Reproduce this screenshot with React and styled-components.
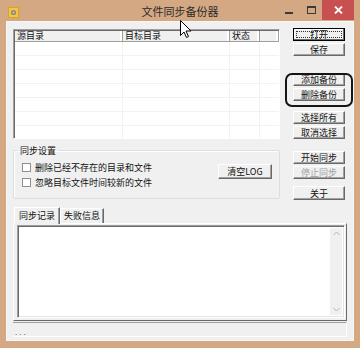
import styled, { createGlobalStyle } from "styled-components";

const GlobalStyle = createGlobalStyle`
  html, body {
    margin: 0;
    padding: 0;
    background: #ffffff;
  }
  * {
    box-sizing: border-box;
  }
`;

const font = `"Noto Sans CJK SC", "Noto Sans", sans-serif`;

const Window = styled.div`
  position: relative;
  width: 360px;
  height: 348px;
  background: #d3a882;
  padding: 0 6px 7px 6px;
  display: flex;
  flex-direction: column;
  font-family: ${font};
  font-size: 9px;
  line-height: 11px;
  color: #111;
`;

const TitleBar = styled.div`
  height: 23px;
  display: grid;
  grid-template-columns: 1fr auto 1fr;
  align-items: start;
`;

const AppIcon = styled.div`
  padding: 7px 0 0 2px;
  display: flex;
`;

const Title = styled.div`
  padding-top: 4px;
  font-size: 11px;
  line-height: 14px;
  color: #2b2b2b;
`;

const Controls = styled.div`
  display: flex;
  justify-content: flex-end;
  align-items: flex-start;
`;

const CtlButton = styled.div`
  width: ${(p) => p.$w}px;
  height: 20px;
  display: flex;
  align-items: center;
  justify-content: center;
  background: ${(p) => (p.$close ? "#c75050" : "transparent")};
`;

const Client = styled.div`
  flex: 1;
  background: #f0f0f0;
  border: 1px solid #f7f7f7;
  padding: 7px 6px 3px 6px;
  display: flex;
  flex-direction: column;
`;

const TopRow = styled.div`
  display: flex;
  align-items: flex-start;
`;

const LeftCol = styled.div`
  width: 267px;
  display: flex;
  flex-direction: column;
`;

const RightCol = styled.div`
  margin-left: auto;
  margin-right: 2px;
  margin-top: -1px;
  width: 52px;
  display: flex;
  flex-direction: column;
`;

const ListView = styled.div`
  height: 110px;
  background: #fff;
  border: 1px solid;
  border-color: #a0a0a0 #ffffff #ffffff #a0a0a0;
  box-shadow: inset 1px 1px 0 #696969;
  padding: 1px 0 0 1px;
  display: flex;
  flex-direction: column;
  overflow: hidden;
`;

const Header = styled.div`
  display: flex;
  height: 11px;
  background: #f0f0f0;
  border-bottom: 1px solid #a0a0a0;
`;

const HeadCell = styled.div`
  width: ${(p) => p.$w}px;
  flex: ${(p) => (p.$grow ? 1 : "none")};
  padding-left: 2px;
  line-height: 10px;
  border-right: 1px solid #a0a0a0;
  box-shadow: inset -2px 0 0 #ffffff;
  white-space: nowrap;
`;

const Rows = styled.div`
  flex: 1;
  background-image: linear-gradient(to bottom, transparent 13px, #f2f2f2 13px),
    linear-gradient(to right, transparent 107px, #f2f2f2 107px, #f2f2f2 108px, transparent 108px, transparent 214px, #f2f2f2 214px, #f2f2f2 215px, transparent 215px, transparent 244px, #f2f2f2 244px, #f2f2f2 245px, transparent 245px);
  background-size: 100% 14px, 100% 100%;
`;

const Group = styled.fieldset`
  margin: 6px 0 0 0;
  height: 54px;
  border: 1px solid #d5dfe5;
  box-shadow: inset 1px 1px 0 #ffffff;
  border-radius: 2px;
  padding: 0 7px 0 8px;
  display: flex;
  align-items: flex-start;
`;

const Legend = styled.legend`
  padding: 0 2px;
  margin-left: -4px;
  line-height: 11px;
`;

const Checks = styled.div`
  display: flex;
  flex-direction: column;
  gap: 4px;
  padding-top: 6px;
`;

const CheckRow = styled.label`
  display: flex;
  align-items: center;
  gap: 4px;
  height: 11px;
  white-space: nowrap;
`;

const Box = styled.span`
  width: 9px;
  height: 9px;
  background: #fff;
  border: 1px solid #8f8f8f;
`;

const Btn = styled.div`
  width: ${(p) => p.$w || 52}px;
  height: ${(p) => p.$h || 13}px;
  display: flex;
  align-items: center;
  justify-content: center;
  white-space: nowrap;
  background: #f0f0f0;
  color: ${(p) => (p.$disabled ? "#a0a0a0" : "#111")};
  border: 1px solid;
  border-color: ${(p) =>
    p.$default ? "#000 #000 #000 #000" : "#ffffff #696969 #696969 #ffffff"};
  box-shadow: ${(p) =>
    p.$default
      ? "inset -1px -1px 0 #696969, inset 1px 1px 0 #fff"
      : "inset -1px -1px 0 #a0a0a0"};
  position: relative;
`;

const Focus = styled.span`
  position: absolute;
  inset: 2px;
  border: 1px dotted #333;
`;

const Stack = styled.div`
  display: flex;
  flex-direction: column;
  gap: 2px;
  margin-top: ${(p) => p.$mt || 0}px;
`;

const ClearBtn = styled(Btn)`
  margin-left: auto;
  margin-top: 8px;
`;

const Tabs = styled.div`
  display: flex;
  align-items: flex-end;
  height: 17px;
  margin-top: 6px;
  padding-left: 1px;
`;

const Tab = styled.div`
  height: ${(p) => (p.$active ? 17 : 15)}px;
  padding: ${(p) => (p.$active ? "2px 4px 0" : "1px 3px 0")};
  white-space: nowrap;
  border: 1px solid;
  border-bottom: none;
  border-color: #ffffff #696969 transparent #ffffff;
  box-shadow: inset -1px 0 0 #a0a0a0;
  background: #f0f0f0;
  position: relative;
  z-index: ${(p) => (p.$active ? 1 : 0)};
  margin-bottom: ${(p) => (p.$active ? -1 : 0)}px;
`;

const Panel = styled.div`
  height: 98px;
  border: 1px solid;
  border-color: #ffffff #696969 #696969 #ffffff;
  padding: 1px 1px 2px 3px;
  display: flex;
`;

const Edit = styled.div`
  flex: 1;
  background: #fff;
  border: 1px solid;
  border-color: #a0a0a0 #ffffff #ffffff #a0a0a0;
  box-shadow: inset 1px 1px 0 #696969, inset -1px -1px 0 #e3e3e3;
  display: flex;
  justify-content: flex-end;
  padding: 2px 2px 2px 0;
`;

const ScrollBar = styled.div`
  width: 12px;
  background: #f0f0f0;
  display: flex;
  flex-direction: column;
  justify-content: space-between;
  align-items: center;
  padding: 3px 0;
`;

const StatusBar = styled.div`
  margin-top: 1px;
  height: 15px;
  border-top: 1px solid #a0a0a0;
  border-right: 1px solid #ffffff;
  border-bottom: 1px solid #ffffff;
  padding-left: 2px;
  display: flex;
  align-items: flex-end;
  font-size: 8px;
  color: #707070;
  line-height: 9px;
  letter-spacing: 2px;
`;

const Annotation = styled.div`
  position: absolute;
  left: 285px;
  top: 73px;
  width: 68px;
  height: 34px;
  border: 2px solid #151515;
  border-radius: 7px;
  pointer-events: none;
`;

const Cursor = styled.svg`
  position: absolute;
  left: 180px;
  top: 20px;
`;

const Arrow = ({ up }) => (
  <svg width="7" height="5" viewBox="0 0 7 5">
    <path
      d={up ? "M0.5 4 L3.5 1 L6.5 4" : "M0.5 1 L3.5 4 L6.5 1"}
      fill="none"
      stroke="#b5b5b5"
      strokeWidth="1"
    />
  </svg>
);

export default function App() {
  return (
    <>
      <GlobalStyle />
      <Window>
        <TitleBar>
          <AppIcon>
            <svg width="11" height="11" viewBox="0 0 11 11">
              <rect x="0" y="0" width="11" height="11" rx="1" fill="#e0a21a" />
              <rect x="1" y="1" width="9" height="9" fill="#f3c64a" />
              <circle cx="5.5" cy="5.5" r="2.6" fill="#8a8a8a" />
              <circle cx="5.5" cy="5.5" r="1.1" fill="#f3c64a" />
            </svg>
          </AppIcon>
          <Title>文件同步备份器</Title>
          <Controls>
            <CtlButton $w={22}>
              <svg width="9" height="10" viewBox="0 0 9 10">
                <rect x="0" y="7" width="8" height="2" fill="#3a3a3a" />
              </svg>
            </CtlButton>
            <CtlButton $w={22}>
              <svg width="9" height="9" viewBox="0 0 9 9">
                <rect x="0.5" y="0.5" width="8" height="7" fill="none" stroke="#3a3a3a" />
                <rect x="0.5" y="0.5" width="8" height="1.5" fill="#3a3a3a" />
              </svg>
            </CtlButton>
            <CtlButton $w={32} $close>
              <svg width="9" height="8" viewBox="0 0 9 8">
                <path d="M1 0.5 L8 7.5 M8 0.5 L1 7.5" stroke="#fff" strokeWidth="1.8" />
              </svg>
            </CtlButton>
          </Controls>
        </TitleBar>
        <Client>
          <TopRow>
            <LeftCol>
              <ListView>
                <Header>
                  <HeadCell $w={108}>源目录</HeadCell>
                  <HeadCell $w={107}>目标目录</HeadCell>
                  <HeadCell $w={30}>状态</HeadCell>
                  <HeadCell $grow />
                </Header>
                <Rows />
              </ListView>
              <Group>
                <Legend>同步设置</Legend>
                <Checks>
                  <CheckRow>
                    <Box />
                    删除已经不存在的目录和文件
                  </CheckRow>
                  <CheckRow>
                    <Box />
                    忽略目标文件时间较新的文件
                  </CheckRow>
                </Checks>
                <ClearBtn $w={54} $h={15}>清空LOG</ClearBtn>
              </Group>
            </LeftCol>
            <RightCol>
              <Stack>
                <Btn $default>
                  <Focus />
                  打开
                </Btn>
                <Btn>保存</Btn>
              </Stack>
              <Stack $mt={17}>
                <Btn>添加备份</Btn>
                <Btn>删除备份</Btn>
              </Stack>
              <Stack $mt={10}>
                <Btn>选择所有</Btn>
                <Btn>取消选择</Btn>
              </Stack>
              <Stack $mt={12}>
                <Btn>开始同步</Btn>
                <Btn $disabled>停止同步</Btn>
              </Stack>
              <Stack $mt={7}>
                <Btn $h={14}>关于</Btn>
              </Stack>
            </RightCol>
          </TopRow>
          <Tabs>
            <Tab $active>同步记录</Tab>
            <Tab>失败信息</Tab>
          </Tabs>
          <Panel>
            <Edit>
              <ScrollBar>
                <Arrow up />
                <Arrow />
              </ScrollBar>
            </Edit>
          </Panel>
          <StatusBar>...</StatusBar>
        </Client>
        <Annotation />
        <Cursor width="12" height="19" viewBox="0 0 12 19">
          <path
            d="M0.5 0.5 L0.5 15.5 L4 12 L6.5 17.5 L8.5 16.5 L6 11 L11 11 Z"
            fill="#fff"
            stroke="#000"
            strokeWidth="1"
          />
        </Cursor>
      </Window>
    </>
  );
}
